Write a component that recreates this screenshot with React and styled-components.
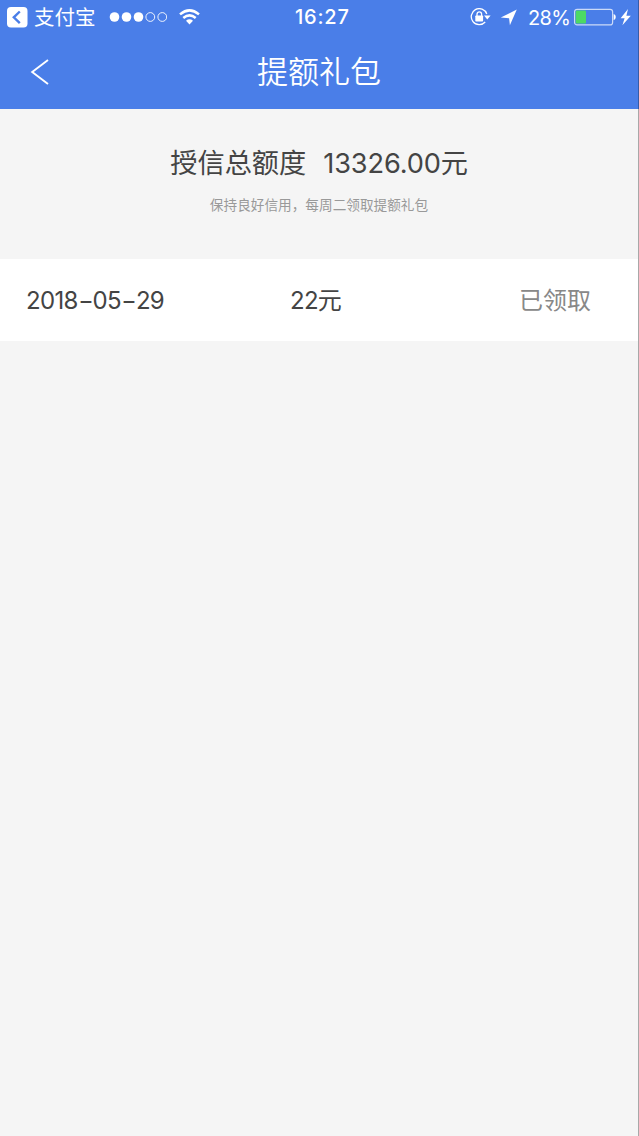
import React from 'react';
import styled, { createGlobalStyle } from 'styled-components';

const GlobalStyle = createGlobalStyle`
  * { box-sizing: border-box; }
  body {
    margin: 0;
    background: #f5f5f5;
    font-family: Inter, "Noto Sans CJK SC", sans-serif;
    font-weight: 375;
  }
`;

const Screen = styled.div`
  width: 639px;
  min-height: 1136px;
  background: #f5f5f5;
  border-right: 1px solid #a8a8a8;
`;

const TopArea = styled.header`
  height: 109px;
  background: #4a7ee8;
  color: #fff;
  margin-right: -1px;
  border-right: 1px solid #365ca8;
`;

const StatusBar = styled.div`
  height: 34px;
  display: grid;
  grid-template-columns: 295px 56px 1fr;
  align-items: center;
`;

const StatusGroup = styled.div`
  display: flex;
  align-items: center;
  height: 34px;
  padding-left: ${(p) => p.$start}px;
  svg { flex: none; display: block; }
`;

const ReturnLabel = styled.span`
  width: 62px;
  margin: 0 13px 0 6px;
  font-size: 20.5px;
  line-height: 34px;
  padding-top: 2px;
  white-space: nowrap;
`;

const Signal = styled.svg`
  margin-right: 12px;
`;

const Clock = styled.time`
  font-size: 20px;
  font-weight: 500;
  line-height: 33px;
  padding-top: 1px;
  letter-spacing: 0.8px;
  white-space: nowrap;
`;

const Percent = styled.span`
  width: 42px;
  margin: 0 4px 0 10px;
  font-size: 20px;
  letter-spacing: -0.6px;
  line-height: 34px;
  padding-top: 2px;
  white-space: nowrap;
`;

const NavBar = styled.div`
  height: 75px;
  display: grid;
  grid-template-columns: 80px 1fr 80px;
  align-items: center;
`;

const BackButton = styled.button`
  border: 0;
  padding: 0 0 0 30px;
  height: 75px;
  background: none;
  display: flex;
  align-items: center;
`;

const Title = styled.h1`
  margin: 0;
  font-size: 31px;
  font-weight: 350;
  line-height: 75px;
  text-align: center;
`;

const Summary = styled.section`
  height: 150px;
  padding-top: 34px;
  display: flex;
  flex-direction: column;
  align-items: center;
`;

const Total = styled.div`
  display: flex;
  gap: 17px;
  font-size: 27.2px;
  line-height: 42px;
  color: #444;
  white-space: nowrap;
`;

const Amount = styled.span`
  letter-spacing: ${(p) => p.$spacing || 0}px;
`;

const Hint = styled.p`
  margin: 8px 0 0;
  font-size: 13.65px;
  line-height: 24px;
  color: #999;
  white-space: nowrap;
`;

const Row = styled.div`
  height: 82px;
  padding: 2px 0 0 26px;
  display: grid;
  grid-template-columns: 264px 229px 1fr;
  align-items: center;
  background: #fff;
  color: #444;
  font-size: 24px;
  line-height: 80px;
  white-space: nowrap;
`;

const DateText = styled.time`
  letter-spacing: -0.7px;
`;

const Dash = styled.span`
  display: inline-block;
  width: 15px;
  text-align: center;
  transform: scaleX(1.4);
`;

const Status = styled.span`
  color: #888;
`;

export default function App() {
  return (
    <Screen>
      <GlobalStyle />
      <TopArea>
        <StatusBar>
          <StatusGroup $start={7}>
            <svg width="21" height="21" viewBox="0 0 21 21">
              <rect width="20.5" height="20.5" rx="4" fill="#fff" />
              <path d="M12.8 4.5 6.8 10.3l6 5.8" fill="none" stroke="#4a7ee8" strokeWidth="2.4" />
            </svg>
            <ReturnLabel>支付宝</ReturnLabel>
            <Signal width="58" height="10" viewBox="0 0 58 10">
              <g fill="#fff">
                <circle cx="5.5" cy="5" r="4.8" />
                <circle cx="17.5" cy="5" r="4.8" />
                <circle cx="29.5" cy="5" r="4.8" />
              </g>
              <g fill="none" stroke="#fff" strokeWidth="0.9">
                <circle cx="41.3" cy="5" r="4.4" />
                <circle cx="53.3" cy="5" r="4.4" />
              </g>
            </Signal>
            <svg width="21" height="16" viewBox="0 0 21 16">
              <g fill="none" stroke="#fff" strokeWidth="2.5">
                <path d="M1 5.4Q10.5-2.6 20 5.4" />
                <path d="M4.3 9Q10.5 3.8 16.7 9" />
              </g>
              <path d="M7 11.7q3.5-2.8 7 0L10.5 15.5Z" fill="#fff" />
            </svg>
          </StatusGroup>
          <Clock>16:27</Clock>
          <StatusGroup $start={119}>
            <svg width="21" height="18" viewBox="0 0 21 18">
              <path d="M16.8 6A8 8 0 1 0 15.2 14" fill="none" stroke="#fff" strokeWidth="1.3" />
              <path d="M14 7.4h6.6L17.3 11.4Z" fill="#fff" />
              <rect x="5.3" y="7.6" width="7.8" height="5.8" rx=".7" fill="#fff" />
              <path d="M7 8V6.2a2.3 2.3 0 0 1 4.6 0V8" fill="none" stroke="#fff" strokeWidth="1.3" />
            </svg>
            <svg width="27" height="17" viewBox="0 0 27 17">
              <path d="M25.8.6 18.9 16.3 18.1 9.3 9.8 8.5Z" fill="#fff" />
            </svg>
            <Percent>28%</Percent>
            <svg width="58" height="18" viewBox="0 0 58 18">
              <rect x=".6" y="1.3" width="38" height="15.6" rx="2.5" fill="none" stroke="#cbdaf8" strokeWidth="1.2" />
              <rect x="1.7" y="2.6" width="10.3" height="12.8" rx="1" fill="#4cd964" />
              <path d="M39.6 5.9q2.2.6 2.2 3.2t-2.2 3.2Z" fill="#fff" />
              <path d="M54 1 46.6 10.2h4L48.4 17.2 56.8 7.8h-4.4Z" fill="#fff" />
            </svg>
          </StatusGroup>
        </StatusBar>
        <NavBar>
          <BackButton aria-label="返回">
            <svg width="20" height="28" viewBox="0 0 20 28">
              <path d="M18 2 2.2 14 18 26" fill="none" stroke="#fff" strokeWidth="1.9" />
            </svg>
          </BackButton>
          <Title>提额礼包</Title>
        </NavBar>
      </TopArea>
      <Summary>
        <Total>
          <span>授信总额度</span>
          <Amount $spacing={-0.15}>13326.00元</Amount>
        </Total>
        <Hint>保持良好信用，每周二领取提额礼包</Hint>
      </Summary>
      <Row>
        <DateText>2018<Dash>-</Dash>05<Dash>-</Dash>29</DateText>
        <Amount $spacing={-0.7}>22元</Amount>
        <Status>已领取</Status>
      </Row>
    </Screen>
  );
}
